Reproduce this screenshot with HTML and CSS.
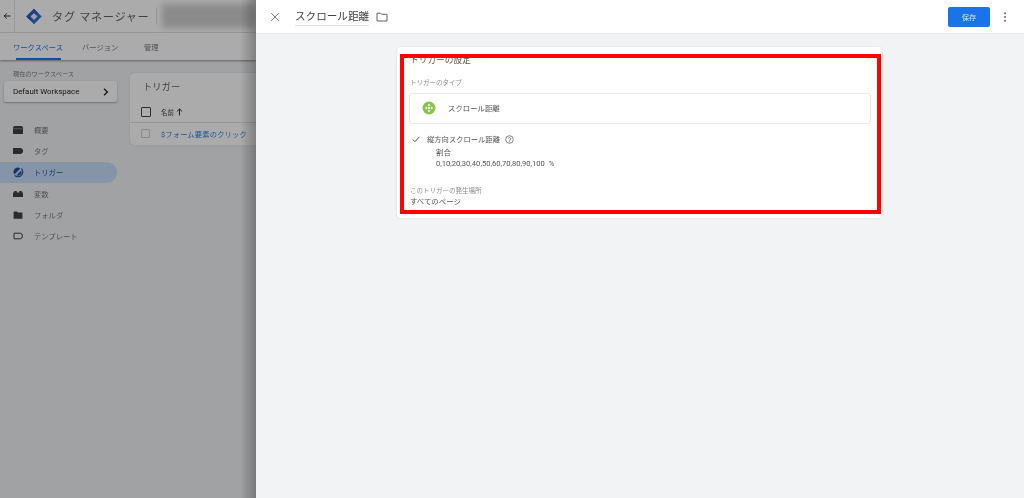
FILE: index.html
```html
<!DOCTYPE html>
<html lang="ja">
<head>
<meta charset="utf-8">
<title>スクロール距離</title>
<link rel="stylesheet" href="styles.css">
</head>
<body>
<div class="app">
  <div class="behind">
    <header class="topbar">
      <span class="back"><svg width="8" height="8" viewBox="0 0 8 8"><path d="M7.5 4H1.2M3.8 1.4 1.2 4l2.6 2.6" fill="none" stroke="#333" stroke-width="1"/></svg></span>
      <svg class="logo" width="17" height="17" viewBox="0 0 17 17"><path d="M8.5 0.3 16.7 8.5 8.5 16.7 0.3 8.5Z" fill="#2f6fd0"/><path d="M8.5 0.3 12.6 4.4 4.4 12.6 0.3 8.5Z" fill="#2760ba"/><rect x="5.9" y="5.9" width="5.2" height="5.2" rx=".6" transform="rotate(45 8.5 8.5)" fill="#e8eef8"/></svg>
      <span class="brand">タグ マネージャー</span>
      <span class="vline"></span>
      <span class="smudge"></span>
    </header>
    <nav class="tabs">
      <span class="tab tab-on">ワークスペース</span>
      <span class="tab tab-ver">バージョン</span>
      <span class="tab tab-adm">管理</span>
    </nav>
    <div class="body-row">
      <aside class="side">
        <div class="ws-label">現在のワークスペース</div>
        <div class="ws-btn"><span>Default Workspace</span><svg width="6" height="8" viewBox="0 0 6 8"><path d="M1 .8 4.4 4 1 7.2" fill="none" stroke="#222" stroke-width="1.3"/></svg></div>
        <ul class="nav">
          <li><svg width="12" height="10" viewBox="0 0 12 10"><path d="M1 3Q1 1 3 1H9Q11 1 11 3V8.5Q11 9 10 9H2Q1 9 1 8.5Z" fill="#3f4042"/><path d="M1.5 3.6H10.5" stroke="#9a9a9c" stroke-width=".7"/></svg><span>概要</span></li>
          <li><svg width="12" height="10" viewBox="0 0 12 10"><path d="M1 2H9L11 3.8V6.2L9 8H1Z" fill="#3f4042"/></svg><span>タグ</span></li>
          <li class="on"><svg width="12" height="12" viewBox="0 0 12 12"><path d="M2.6 9.4A4.8 4.8 0 1 0 9.4 2.6" fill="none" stroke="#1e4f9c" stroke-width="1.1"/><path d="M2.4 8.4A4.3 4.3 0 0 1 8.4 2.4Z" fill="#1e4f9c"/><path d="M4.4 9.2 9.2 4.4A3.5 3.5 0 0 1 4.4 9.2Z" fill="#2a5fb0"/></svg><span>トリガー</span></li>
          <li><svg width="12" height="10" viewBox="0 0 12 10"><path d="M1 3.5H2.2V2H4.8V3.5H7.2V2H9.8V3.5H11V8H1Z" fill="#3f4042"/></svg><span>変数</span></li>
          <li><svg width="12" height="10" viewBox="0 0 12 10"><path d="M1.6 1.5H5L6 2.6H10.4V8.8H1.6Z" fill="#3f4042"/></svg><span>フォルダ</span></li>
          <li><svg width="12" height="10" viewBox="0 0 12 10"><path d="M2 2.2H8.2Q10.4 2.2 10.4 5T8.2 7.8H2Z" fill="none" stroke="#3f4042" stroke-width="1"/></svg><span>テンプレート</span></li>
        </ul>
      </aside>
      <main class="list-card">
        <h2 class="list-title">トリガー</h2>
        <div class="list-head"><span class="cb cb-dark"></span><span class="col">名前</span><svg width="7" height="8" viewBox="0 0 7 8"><path d="M3.5 7.5V1M1 3.4 3.5 1 6 3.4" fill="none" stroke="#333" stroke-width="1"/></svg></div>
        <div class="list-row"><span class="cb"></span><span class="link">$フォーム要素のクリック</span></div>
      </main>
    </div>
  </div>
  <section class="panel">
    <header class="panel-head">
      <svg class="close" width="10" height="10" viewBox="0 0 10 10"><path d="M1.2 1.2 8.8 8.8M8.8 1.2 1.2 8.8" stroke="#777" stroke-width="1"/></svg>
      <span class="title">スクロール距離</span>
      <svg class="folder" width="12" height="10" viewBox="0 0 12 10"><path d="M1 1.2H4.6L5.6 2.3H11V9H1Z" fill="none" stroke="#5f6368" stroke-width="1"/></svg>
      <button class="save">保存</button>
      <svg class="more" width="4" height="10" viewBox="0 0 4 10"><circle cx="2" cy="1.3" r="1" fill="#666"/><circle cx="2" cy="5" r="1" fill="#666"/><circle cx="2" cy="8.7" r="1" fill="#666"/></svg>
    </header>
    <div class="panel-body">
      <article class="card">
        <h3 class="card-title">トリガーの設定</h3>
        <div class="label label-type">トリガーのタイプ</div>
        <div class="type-box">
          <svg width="14" height="14" viewBox="0 0 14 14"><circle cx="7" cy="7" r="6.5" fill="#8bc34a"/><path d="M7 2.8 8.6 4.8H5.4ZM7 11.2 5.4 9.2H8.6ZM2.8 7 4.8 5.4V8.6ZM11.2 7 9.2 8.6V5.4Z" fill="#fff"/><rect x="5.9" y="5.9" width="2.2" height="2.2" fill="#fff"/></svg>
          <span>スクロール距離</span>
        </div>
        <div class="cond">
          <svg width="8" height="7" viewBox="0 0 8 7"><path d="M.8 3.6 2.9 5.7 7.2 1" fill="none" stroke="#555" stroke-width="1"/></svg>
          <span class="cond-name">縦方向スクロール距離</span>
          <svg class="help" width="9" height="9" viewBox="0 0 9 9"><circle cx="4.5" cy="4.5" r="3.8" fill="none" stroke="#666" stroke-width=".8"/><path d="M3.3 3.6A1.2 1.2 0 1 1 4.5 5V5.6" fill="none" stroke="#666" stroke-width=".8"/><circle cx="4.5" cy="6.8" r=".5" fill="#666"/></svg>
        </div>
        <div class="sub sub-kind">割合</div>
        <div class="sub sub-nums"><span>0,10,20,30,40,50,60,70,80,90,100</span><span class="pct">%</span></div>
        <div class="label label-where">このトリガーの発生場所</div>
        <div class="where">すべてのページ</div>
        <div class="redbox"></div>
      </article>
    </div>
  </section>
</div>
</body>
</html>
```
FILE: styles.css
```css
* { box-sizing: border-box; }
html, body { margin: 0; height: 100%; overflow: hidden; }
body { font-family: Roboto, "Noto Sans CJK JP", sans-serif; color: #3c4043; }
.app { display: flex; width: 1024px; height: 498px; }

.behind { position: relative; width: 256px; flex: none; overflow: hidden; background: #eff1f3; filter: blur(.4px); }
.behind::after { content: ""; position: absolute; inset: 0; background: linear-gradient(90deg, rgba(0,0,0,.33) 0, rgba(0,0,0,.33) 240px, rgba(0,0,0,.5) 256px); }

.topbar { display: flex; align-items: center; height: 33px; background: #fff; border-bottom: 1px solid #e6e6e6; }
.back { display: flex; justify-content: center; align-items: center; width: 16px; height: 33px; border-right: 1px solid #e2e2e2; }
.logo { margin-left: 11px; }
.brand { margin-left: 10px; font-size: 11.2px; letter-spacing: .65px; color: #5f6368; white-space: nowrap; width: 95px; }
.vline { width: 1px; height: 16px; background: #ddd; margin-left: 9px; }
.smudge { width: 100px; height: 24px; margin-left: 5px; background: #cfcfcf; filter: blur(3px); }

.tabs { display: flex; height: 27px; background: #fff; box-shadow: 0 1px 2px rgba(0,0,0,.4); position: relative; font-size: 7.3px; color: #777; }
.tab { padding-top: 9px; white-space: nowrap; }
.tab-on { margin-left: 16px; width: 45px; text-indent: -3px; color: #1a73e8; border-bottom: 2px solid #1a73e8; }
.tab-ver { margin-left: 21px; width: 62px; }

.body-row { display: flex; }
.side { width: 130px; flex: none; }
.ws-label { margin: 10px 0 0 13px; font-size: 6.2px; color: #777; line-height: 8px; }
.ws-btn { display: flex; justify-content: space-between; align-items: center; margin: 3px 13px 0 4px; height: 21px; padding: 0 8px 0 9px; background: #fff; border-radius: 2px; box-shadow: 0 1px 2px rgba(0,0,0,.3); font-size: 7.9px; color: #222; }
.nav { list-style: none; margin: 17px 0 0; padding: 0; }
.nav li { display: flex; align-items: center; gap: 10px; height: 21.3px; width: 117px; padding-left: 12px; font-size: 7.3px; color: #777; }
.nav li.on { background: #c6dcf7; border-radius: 0 11px 11px 0; color: #1e4f9c; }

.list-card { flex: none; width: 200px; height: 72px; margin-top: 13px; background: #fff; border-radius: 4px; box-shadow: 0 0 1px rgba(0,0,0,.3); }
.list-title { margin: 0; padding: 8px 0 0 13px; height: 29px; font-size: 9.3px; font-weight: 400; line-height: 12px; color: #5f6368; }
.list-head { display: flex; align-items: center; height: 21px; padding-left: 11px; border-bottom: 1px solid #e0e0e0; font-size: 6.4px; color: #444; }
.list-head .col { margin-right: 2px; }
.cb { width: 9px; height: 9px; margin-right: 11px; border: 1px solid #ccc; border-radius: 1px; flex: none; }
.cb-dark { width: 10px; height: 10px; margin-right: 10px; border-color: #444; }
.list-row { display: flex; align-items: center; height: 21px; padding-left: 11px; font-size: 7.3px; }
.link { color: #2f7be0; white-space: nowrap; letter-spacing: .15px; }

.panel { flex: 1; display: flex; flex-direction: column; background: #f1f3f4; filter: blur(.35px); }
.panel-head { display: flex; align-items: center; height: 34px; flex: none; background: #fff; border-bottom: 1px solid #ebebeb; }
.close { margin-left: 14px; }
.title { margin-left: 15px; width: 74px; height: 19px; padding-top: 3px; border-bottom: 1px solid #e4e4e4; font-size: 10.6px; line-height: 13px; color: #444; white-space: nowrap; }
.folder { margin-left: 7px; }
.save { margin-left: auto; width: 42px; height: 20px; padding: 0; border: 0; border-radius: 2px; background: #1a73e8; color: #cfe0f8; font: 7.3px Roboto, "Noto Sans CJK JP", sans-serif; }
.more { margin: 0 17px 0 13px; }

.panel-body { flex: 1; padding: 13px 0 0 141px; }
.card { position: relative; width: 485px; height: 171px; padding: 7px 11px 0 13px; background: #fff; border-radius: 4px; box-shadow: 0 0 2px rgba(0,0,0,.12); }
.card-title { margin: 0; font-size: 8.7px; font-weight: 400; line-height: 12px; color: #555; }
.label { font-size: 6.5px; line-height: 9px; color: #8a8a8a; white-space: nowrap; }
.label-type { margin-top: 13px; }
.type-box { display: flex; align-items: center; gap: 12px; height: 31px; margin: 5px 0 0 -1px; padding: 0 0 1px 12px; border: 1px solid #e8e8e8; border-radius: 3px; font-size: 7.4px; color: #555; }
.type-box span { margin-bottom: 1px; }
.cond { display: flex; align-items: center; height: 12px; margin: 9px 0 0 2px; font-size: 7.3px; color: #555; }
.cond-name { margin-left: 7px; white-space: nowrap; }
.help { margin-left: 5px; }
.sub { margin-left: 26px; font-size: 7.4px; line-height: 11px; color: #555; }
.sub-kind { margin-top: 2px; }
.sub-nums { display: flex; font-size: 7.6px; }
.pct { margin-left: 4px; }
.label-where { margin-top: 18px; }
.where { margin-top: 1px; font-size: 7.4px; line-height: 10px; color: #555; }
.redbox { position: absolute; left: 3px; top: 7px; width: 481px; height: 160px; border: 4px solid #f00; pointer-events: none; }
```
